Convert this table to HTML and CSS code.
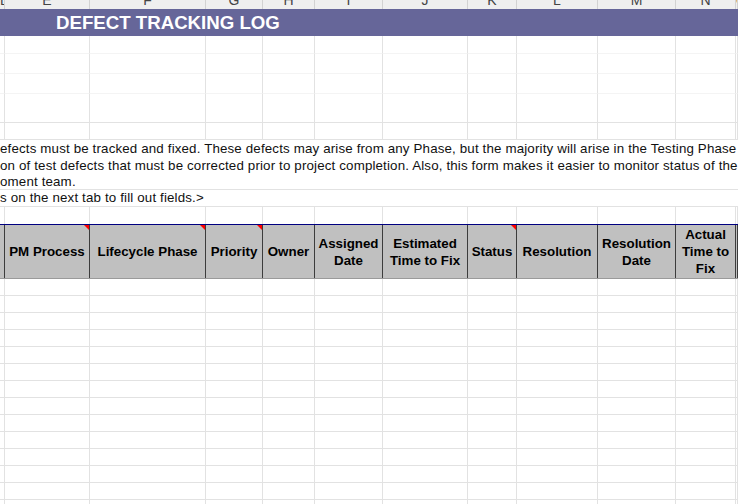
FILE: index.html
```html
<!DOCTYPE html>
<html>
<head>
<meta charset="utf-8">
<link rel="stylesheet" href="styles.css">
</head>
<body>
<div class="sheet">
  <div class="row letters">
    <div class="lc"><span>D</span></div>
    <div class="lc"><span>E</span></div>
    <div class="lc"><span>F</span></div>
    <div class="lc"><span>G</span></div>
    <div class="lc"><span>H</span></div>
    <div class="lc"><span>I</span></div>
    <div class="lc"><span>J</span></div>
    <div class="lc"><span>K</span></div>
    <div class="lc"><span>L</span></div>
    <div class="lc"><span>M</span></div>
    <div class="lc"><span>N</span></div>
    <div class="lc"><span>O</span></div>
  </div>
  <div class="title">DEFECT TRACKING LOG</div>

  <div class="row grid h18 faint"><div></div><div></div><div></div><div></div><div></div><div></div><div></div><div></div><div></div><div></div><div></div><div></div></div>
  <div class="row grid h20 faint"><div></div><div></div><div></div><div></div><div></div><div></div><div></div><div></div><div></div><div></div><div></div><div></div></div>
  <div class="row grid h20 faint"><div></div><div></div><div></div><div></div><div></div><div></div><div></div><div></div><div></div><div></div><div></div><div></div></div>
  <div class="row grid h29"><div></div><div></div><div></div><div></div><div></div><div></div><div></div><div></div><div></div><div></div><div></div><div></div></div>
  <div class="row grid h17"><div></div><div></div><div></div><div></div><div></div><div></div><div></div><div></div><div></div><div></div><div></div><div></div></div>

  <div class="textblock">
    <div class="tline">efects must be tracked and fixed. These defects may arise from any Phase, but the majority will arise in the Testing Phase</div>
    <div class="tline">on of test defects that must be corrected prior to project completion. Also, this form makes it easier to monitor status of the</div>
    <div class="tline">oment team.</div>
  </div>
  <div class="textrow">s on the next tab to fill out fields.&gt;</div>

  <div class="row grid h17 navy"><div></div><div></div><div></div><div></div><div></div><div></div><div></div><div></div><div></div><div></div><div></div><div></div></div>

  <div class="row head">
    <div class="hc"></div>
    <div class="hc note">PM Process</div>
    <div class="hc note">Lifecycle Phase</div>
    <div class="hc note">Priority</div>
    <div class="hc">Owner</div>
    <div class="hc">Assigned<br>Date</div>
    <div class="hc">Estimated<br>Time to Fix</div>
    <div class="hc note">Status</div>
    <div class="hc">Resolution</div>
    <div class="hc">Resolution<br>Date</div>
    <div class="hc">Actual<br>Time to<br>Fix</div>
    <div class="hc"></div>
  </div>

  <div class="row grid h17"><div></div><div></div><div></div><div></div><div></div><div></div><div></div><div></div><div></div><div></div><div></div><div></div></div>
  <div class="row grid h17"><div></div><div></div><div></div><div></div><div></div><div></div><div></div><div></div><div></div><div></div><div></div><div></div></div>
  <div class="row grid h17"><div></div><div></div><div></div><div></div><div></div><div></div><div></div><div></div><div></div><div></div><div></div><div></div></div>
  <div class="row grid h17"><div></div><div></div><div></div><div></div><div></div><div></div><div></div><div></div><div></div><div></div><div></div><div></div></div>
  <div class="row grid h17"><div></div><div></div><div></div><div></div><div></div><div></div><div></div><div></div><div></div><div></div><div></div><div></div></div>
  <div class="row grid h17"><div></div><div></div><div></div><div></div><div></div><div></div><div></div><div></div><div></div><div></div><div></div><div></div></div>
  <div class="row grid h17"><div></div><div></div><div></div><div></div><div></div><div></div><div></div><div></div><div></div><div></div><div></div><div></div></div>
  <div class="row grid h17"><div></div><div></div><div></div><div></div><div></div><div></div><div></div><div></div><div></div><div></div><div></div><div></div></div>
  <div class="row grid h17"><div></div><div></div><div></div><div></div><div></div><div></div><div></div><div></div><div></div><div></div><div></div><div></div></div>
  <div class="row grid h17"><div></div><div></div><div></div><div></div><div></div><div></div><div></div><div></div><div></div><div></div><div></div><div></div></div>
  <div class="row grid h17"><div></div><div></div><div></div><div></div><div></div><div></div><div></div><div></div><div></div><div></div><div></div><div></div></div>
  <div class="row grid h17"><div></div><div></div><div></div><div></div><div></div><div></div><div></div><div></div><div></div><div></div><div></div><div></div></div>
  <div class="row grid h17"><div></div><div></div><div></div><div></div><div></div><div></div><div></div><div></div><div></div><div></div><div></div><div></div></div>
  <div class="row grid h17"><div></div><div></div><div></div><div></div><div></div><div></div><div></div><div></div><div></div><div></div><div></div><div></div></div>
</div>
</body>
</html>
```

FILE: styles.css
```css
* { box-sizing: border-box; }
html, body {
  margin: 0;
  padding: 0;
  background: #ffffff;
}
body {
  width: 738px;
  height: 504px;
  overflow: hidden;
  font-family: "Liberation Sans", Arial, sans-serif;
  color: #000;
}
.sheet {
  width: 738px;
}
.row {
  display: grid;
  grid-template-columns: 5px 85px 116px 57px 52px 68px 85px 49px 81px 78px 60px 1fr;
}

/* column letter header */
.letters {
  height: 9px;
  overflow: hidden;
  background: #efefef;
}
.lc {
  border-right: 1px solid #d2d2d2;
  text-align: center;
  overflow: hidden;
  font-size: 14px;
  color: #444;
}
.lc span {
  display: block;
  line-height: 16px;
  margin-top: -8px;
}

/* title bar */
.title {
  height: 27px;
  background: #666699;
  color: #ffffff;
  font-weight: bold;
  font-size: 18.67px;
  line-height: 27px;
  padding-left: 56px;
  white-space: nowrap;
}

/* grid rows */
.grid > div {
  border-right: 1px solid #e2e2e2;
  border-bottom: 1px solid #e2e2e2;
}
.grid.faint > div {
  border-bottom-color: #f4f4f4;
}
.h17 { height: 17px; }
.h18 { height: 18px; }
.h20 { height: 20px; }
.h29 { height: 29px; }

.navy {
  border-bottom: 1px solid #000080;
  height: 18px;
}
.navy > div {
  height: 17px;
  border-bottom: none;
}

/* merged text area */
.textblock {
  height: 50px;
  border-bottom: 1px solid #e2e2e2;
  font-size: 13.33px;
  letter-spacing: 0.15px;
  line-height: 17px;
  white-space: nowrap;
  overflow: hidden;
  color: #111;
}
.tline {
  height: 16.5px;
}
.textrow {
  height: 17px;
  border-bottom: 1px solid #e2e2e2;
  font-size: 13.33px;
  letter-spacing: 0.15px;
  line-height: 16px;
  white-space: nowrap;
  color: #111;
}

/* table header */
.head {
  height: 54px;
  background: #c0c0c0;
  border-bottom: 1px solid #9a9a9a;
}
.hc {
  position: relative;
  border-right: 1px solid #3c3c3c;
  display: flex;
  align-items: center;
  justify-content: center;
  text-align: center;
  font-weight: bold;
  font-size: 13.33px;
  line-height: 17px;
  white-space: nowrap;
  color: #000;
}
.note::after {
  content: "";
  position: absolute;
  top: 0;
  right: 0;
  width: 0;
  height: 0;
  border-top: 5px solid #ff0000;
  border-left: 5px solid transparent;
}
```
